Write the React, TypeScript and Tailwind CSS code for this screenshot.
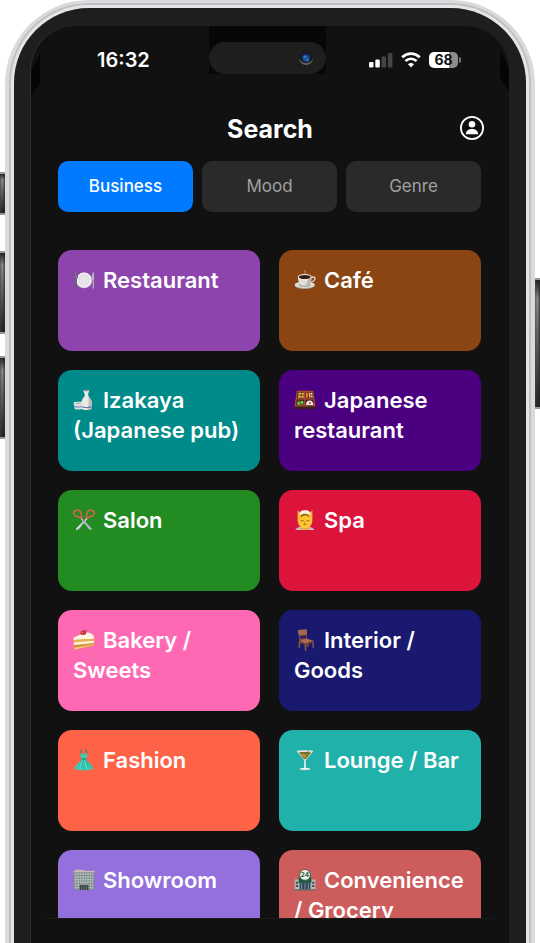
import { useState } from "react"
import type { ReactNode } from "react"

const TABS = ["Business", "Mood", "Genre"]

function Emoji({ children }: { children: ReactNode }) {
  return (
    <svg viewBox="0 0 24 24" aria-hidden="true" className="mr-2 -mt-1 inline-block size-[22px] align-middle">
      {children}
    </svg>
  )
}

const PlateIcon = () => (
  <Emoji>
    <ellipse cx="12" cy="12.5" rx="8.8" ry="8.6" fill="#c9c7d0" />
    <ellipse cx="12" cy="12" rx="8.4" ry="8.2" fill="#efedf2" />
    <circle cx="12" cy="12" r="5.8" fill="#d3d1da" />
    <circle cx="12" cy="12.3" r="5.2" fill="#e8e6ec" />
    <path d="M.8 3.5v5q0 2 1.6 2v10.4q.7 1 1.3 0V10.5q1.400-.3 1.300-2v-5" fill="none" stroke="#665d72" strokeWidth="1.1" />
    <path d="M2.8 3.5v6" stroke="#8e8799" strokeWidth=".8" />
    <path d="M22.9 2.5q-3 3-2.600 9l1.200.5v9.500h1.400z" fill="#c8c5d0" stroke="#716781" strokeWidth=".4" />
  </Emoji>
)

const CoffeeIcon = () => (
  <Emoji>
    <path d="M12.500 5q-2-1.500 0-3.800" fill="none" stroke="#d7a37b" strokeWidth=".9" />
    <ellipse cx="11.7" cy="18" rx="11" ry="3.9" fill="#a9a39e" />
    <ellipse cx="11.7" cy="17.2" rx="11" ry="3.6" fill="#e2deda" />
    <ellipse cx="11.7" cy="17.3" rx="6.8" ry="2.2" fill="#aaa49e" />
    <path d="M18.500 9.500c4-2 5.500.5 3.500 3-1.100 1.400-3 2-4.800 2" fill="none" stroke="#ddd6d0" strokeWidth="1.4" />
    <path d="M4.300 8.600c.2 6.500 2.800 9.700 7.400 9.700s7.300-3.200 7.500-9.700z" fill="#e4dfdb" />
    <path d="M15.500 11.500q-.5 4-3.500 6c5-.2 7-3.200 7.200-8.900z" fill="#b7afa9" />
    <ellipse cx="11.7" cy="8.5" rx="7.5" ry="3" fill="#f5f1ee" />
    <ellipse cx="11.7" cy="8.7" rx="6.5" ry="2.2" fill="#371b17" />
  </Emoji>
)

const SakeIcon = () => (
  <Emoji>
    <path d="M11 1.400q3.500-1.200 7 0l-1.600 4.200q.3 2.700 2 4.400c2.400 2 2.700 6 1.800 11.500-1.600 1.900-9.500 1.900-11 0-.8-5.700-.2-9.300 1.900-11.600 1.300-1.400 1.800-2.500 1.700-4.300z" fill="#ebe9e6" />
    <path d="M16.300 5.800q.3 2.700 2 4.200c2.500 2 2.700 6 1.900 11.500q-2 1.400-4.500 1.300c2-6.500 1.800-11 .6-17z" fill="#b9bcbc" />
    <ellipse cx="14.5" cy="1.7" rx="3.3" ry=".7" fill="#7c898a" />
    <path d="M9.200 19.700q5.500 1.300 11.200 0" fill="none" stroke="#4262ad" strokeWidth="1" />
    <path d="M.7 15.200h10l-1 6.500q-4 1.500-7.800 0z" fill="#dedfdf" />
    <ellipse cx="5.7" cy="15.4" rx="5" ry="1.5" fill="#f8f8f6" />
    <ellipse cx="5.7" cy="15.6" rx="3.8" ry=".9" fill="#a8b3b5" />
    <path d="M1.500 19.200q4 1.200 8.500 0" fill="none" stroke="#4262ad" strokeWidth=".8" />
  </Emoji>
)

const BentoIcon = () => (
  <Emoji>
    <path d="M3 2h18l2.500 17v2.800H.5V19z" fill="#362017" />
    <path d="M3 2h18l2.500 17H.5z" fill="#a84c38" />
    <path d="M4.100 3.500H11l-.3 6.500H3.200zM12.400 3.500h7.500l.9 6.500h-8.200zM3 11.500h8v6.200H2.200zM12.500 11.500H21l.9 6.200h-9.600z" fill="#482214" />
    <path d="M5 4.200h2.500v2.200H4.700zM8.300 4.200h2.400v2.200H8.200zM4.600 7.200h2.700v2.300H4.300zM8.100 7.200h2.500v2.300H8z" fill="#f2bd45" />
    <path d="M13.100 4.200h2l.2 5.200h-2.200z" fill="#ed8135" />
    <path d="M16 4.200h1.700l.3 5h-1.700z" fill="#ffb861" />
    <circle cx="19" cy="5.200" r="1" fill="#f1ede4" />
    <circle cx="19.400" cy="8.300" r="1.100" fill="#e6d9c0" />
    <path d="M3.100 17q.5-4.500 2.500-4.500l1 1.500 1.700-1.700 1.900 1.500.5 3.500z" fill="#51933c" />
    <circle cx="5" cy="16" r="1.200" fill="#96ca5c" />
    <circle cx="9" cy="14.500" r="1.100" fill="#a4d66b" />
    <path d="M13 17.500q.3-5 4.300-4.900 3.400.1 4 4.900z" fill="#f3e8e3" />
    <circle cx="17.300" cy="15.300" r="1.200" fill="#d04f54" />
  </Emoji>
)

const ScissorsIcon = () => (
  <Emoji>
    <path d="m9 9.300 11.500 12.200-.2 1.700q-3.700-1-5.800-5L8 10.500z" fill="#b5bfca" />
    <path d="M15 9.300 3.200 21.500l.3 1.700q3.700-1 5.800-5L16 10.500z" fill="#dce3e8" />
    <path d="m12 12.500-3 6q-2 3.700-5.500 4.700" fill="none" stroke="#8b9fae" strokeWidth=".7" />
    <path d="M9.700 9.800C8.500 9 3.200 9.200 1.500 6.500.2 4.500 1 1.500 4.300 1.200 8.800.8 9 5 9.700 9.800z" fill="none" stroke="#df604c" strokeWidth="1.700" />
    <path d="M14.300 9.800c1.200-.8 6.500-.6 8.200-3.300 1.300-2 .5-5-2.800-5.300-4.500-.4-4.700 3.800-5.400 8.600z" fill="none" stroke="#df604c" strokeWidth="1.700" />
    <circle cx="12" cy="12.800" r=".9" fill="#65707c" />
  </Emoji>
)

const MassageIcon = () => (
  <Emoji>
    <path d="M1.500 23q1-3.500 7-4h6.300q6.200.5 7.400 4z" fill="#c8b9c3" />
    <path d="M8.500 17h7l1.200 4.500q-4.500 2-9.300 0z" fill="#e5a51e" />
    <path d="M4 9q0-7 8-7.500 8 .5 8 7.500v4c-.6 5.300-3.800 8.200-8 8.200S4.700 18.200 4 13z" fill="#ffc532" />
    <path d="M5 7.500Q5.500 1 12 1.300 18.500 1 19 7.500q-3.500-3-7-3t-7 3z" fill="#f2eeeb" />
    <path d="M4 .5q2.500 3 2.200 7.300l2.500 1.700-1.500 1.500L4 8.500zM20 .5q-2.500 3-2.200 7.300l-2.500 1.700 1.500 1.500L20 8.500z" fill="#ffb82d" />
    <path d="M7.500 8.200q4-4 8.800-.4" fill="none" stroke="#704721" strokeWidth="1.300" />
    <path d="M7.200 12.600q1.500 1.200 3.200 0m3.200 0q1.700 1.200 3.200 0M10.500 17q1.500-1 3 0" fill="none" stroke="#854b18" strokeWidth=".9" />
    <path d="m12 13-.7 2.200h1.300" fill="none" stroke="#d38a14" strokeWidth=".7" />
  </Emoji>
)

const CakeIcon = () => (
  <Emoji>
    <path d="M.5 9.500 13.500 4q7.500.3 9.500 5v9.300L1.500 22.500z" fill="#e8ac4f" />
    <path d="M.5 9.500 13.500 3.500q8 .3 9.500 5.300v1.700L.7 12z" fill="#fff5e3" />
    <path d="m.7 12 22.300-1.500v2L.7 14z" fill="#e9ae4d" />
    <path d="M.8 14.500 23 12.700v2.500L1 17.500z" fill="#fff0d7" />
    <path d="m1 18 22-2.500v2.800L1.500 22.500z" fill="#d38b34" />
    <path d="m1.300 20.500 21.700-4v1L1.500 22.500z" fill="#f2cc80" />
    <path d="M8 5.700q-.4-4 3.500-4 4 .5 2.700 3.800Q11.500 7.500 8 5.700z" fill="#c93438" />
    <path d="M11.500 1.600q2-1.500 4 .5-1.700 1-4-.5z" fill="#47792e" />
    <circle cx="10.300" cy="3.700" r=".6" fill="#f28d75" />
  </Emoji>
)

const ChairIcon = () => (
  <Emoji>
    <path d="M4.500 1.200 13.800.5l.7 11-8.500 1.200z" fill="#88513d" />
    <path d="m6.500 7.800 6.700-.6.2 2.500-6.500.8z" fill="#1a1b70" />
    <path d="m4.500 1.200 9.300-.7.3 5.200-9.200.7z" fill="#a9694e" />
    <path d="m5 13 9-2.500 7.500 2.300-8.800 3.400z" fill="#ac6d4f" />
    <path d="m5 13 7.700 3.200v1.500L5 14.500zM12.700 16.200l8.800-3.400v1.600l-8.800 3.300z" fill="#71422f" />
    <path d="M5 14v6.500h1.700v-6zM11.500 16.500l.3 7.200h1.600l.2-7zM20 14l.2 7h1.500l-.2-7.500zM14.500 16v3.500h1.300v-4z" fill="#925941" />
  </Emoji>
)

const DressIcon = () => (
  <Emoji>
    <path d="m9.200.500-.7 5m5.700-5 1 5" stroke="#1a8a82" strokeWidth="1.200" />
    <path d="M8.500 4q2 1.500 3.300 1.700Q13.500 5.500 15.300 4l.3 4-1.300 3.300c1.500 3 6.200 5.300 8 10q-2.500 1.500-5 1.300-2.400 1-5.200.7-3.200.3-5.600-.6Q3.300 23 1.500 21c1.800-4.500 6.500-6.500 8-9.700L8 8z" fill="#3bcdb5" />
    <path d="m10 12-5 9.500m4-1 2-8.500m1 1v9m2-9.500 3 9M14 12l6 8.500" stroke="#1da596" strokeWidth=".7" />
    <path d="M10 13 7 21m6-8 2 8.500" stroke="#8be3d3" strokeWidth=".7" />
    <path d="M9.200 10.200h5.400v1.300H9.200z" fill="#0b8a80" />
  </Emoji>
)

const CocktailIcon = () => (
  <Emoji>
    <path d="M3 2.500h18l-8 9.800h-2z" fill="#d9e2d8" />
    <path d="M5.500 4.200h13l-5.500 7h-2z" fill="#8c7127" />
    <path d="M7.500 5.500h8L12 10z" fill="#c29a3d" />
    <ellipse cx="12" cy="2.500" rx="9" ry="1.100" fill="#ece6d8" />
    <ellipse cx="12" cy="4" rx="6.500" ry=".8" fill="#6b682d" />
    <path d="m12 8 3.800-6" stroke="#784f2d" strokeWidth=".8" />
    <circle cx="13" cy="6.500" r="1.500" fill="#718c36" />
    <path d="M11.200 11.500h1.600L13 21h-2z" fill="#e7efec" />
    <ellipse cx="12" cy="21.800" rx="5.800" ry="1.300" fill="#cedbd8" />
    <ellipse cx="12" cy="21.400" rx="4.500" ry=".7" fill="#f6faf8" />
  </Emoji>
)

const BuildingIcon = () => (
  <Emoji>
    <path d="M2.500.8h9V3h-9z" fill="#c7b4a7" />
    <path d="M.8 2.500h22.400v20.300H.8z" fill="#858c8e" />
    <path d="M.5 2h23v1.700H.5z" fill="#cbbcb0" />
    <path d="M2 5.800h20M2 8.700h20M2 11.600h20M2 14.500h20M2 17.400h20M2 20.300h20" stroke="#bcd0d1" strokeWidth="1.700" strokeDasharray="1.700 1" />
    <path d="M7.300 16.700h9.600v6.200H7.300z" fill="#374247" />
    <path d="M9.500 18v4.900m2.600-4.900v4.900m2.500-4.900v4.900" stroke="#738b90" strokeWidth=".8" />
    <path d="M6.800 16h10.600v1.300H6.800z" fill="#b4a69b" />
  </Emoji>
)

const StoreIcon = () => (
  <Emoji>
    <path d="M.8 11.500h4v-1h14.500v1h4V23H.8z" fill="#b8bab5" />
    <path d="M5 9.500h14V15H5z" fill="#20583f" />
    <path d="M6 14.500h12V23H6z" fill="#314b5b" />
    <path d="M8.300 15.500v7m3.700-7v7m3.700-7v7" stroke="#7e9dad" strokeWidth="1" />
    <path d="M2 14h2.500v2H2zm0 3.500h2.500v2H2zM19.800 14h2.400v2h-2.400zm0 3.500h2.400v2h-2.400z" fill="#354f55" />
    <path d="M.5 22h23v1.500H.5z" fill="#696f6b" />
    <circle cx="12" cy="6.700" r="6.300" fill="#36734b" />
    <circle cx="12" cy="6.500" r="5.300" fill="#f0f3e9" />
    <text x="12" y="9" textAnchor="middle" fontSize="7" fontWeight="700" fill="#2b5842">
      24
    </text>
  </Emoji>
)

const CATEGORIES = [
  { name: "Restaurant", color: "bg-[#8e44ad]", Icon: PlateIcon },
  { name: "Café", color: "bg-[#8b4513]", Icon: CoffeeIcon },
  { name: "Izakaya (Japanese pub)", color: "bg-[#008b8b]", Icon: SakeIcon },
  { name: "Japanese restaurant", color: "bg-[#4b0082]", Icon: BentoIcon },
  { name: "Salon", color: "bg-[#228b22]", Icon: ScissorsIcon },
  { name: "Spa", color: "bg-[#dc143c]", Icon: MassageIcon },
  { name: "Bakery / Sweets", color: "bg-[#ff69b4]", Icon: CakeIcon },
  { name: "Interior / Goods", color: "bg-[#191970]", Icon: ChairIcon },
  { name: "Fashion", color: "bg-[#ff6347]", Icon: DressIcon },
  { name: "Lounge / Bar", color: "bg-[#20b2aa]", Icon: CocktailIcon },
  { name: "Showroom", color: "bg-[#9370db]", Icon: BuildingIcon },
  { name: "Convenience / Grocery", color: "bg-[#cd5c5c]", Icon: StoreIcon },
]

function SideKey({ size }: { size: string }) {
  return (
    <div
      className={`${size} w-full border-y-2 border-[#999] bg-linear-to-b from-[#222] via-[#8c8c8c] via-15% to-[#222]`}
    >
      <div className="h-full bg-linear-to-r from-[#444]/60 via-transparent to-[#222]/70" />
    </div>
  )
}

function StatusBar() {
  return (
    <div className="grid h-[67px] shrink-0 grid-cols-[1fr_117px_183px]">
      <div className="pt-5 pl-[66px] text-xl leading-7 font-semibold">16:32</div>

      {/* Dynamic island */}
      <div className="h-12 bg-[#070707] pt-4">
        <div className="flex h-8 items-center justify-end rounded-full bg-[#1e1e1c] pr-3">
          <svg viewBox="0 0 16 16" className="size-4" aria-hidden="true">
            <circle cx="8" cy="8" r="7.500" fill="#171b20" />
            <path d="M.8 8a7.200 7.200 0 0 0 14.400 0q-1.500 4.500-7.200 4.500T.8 8z" fill="#5c5c59" />
            <circle cx="8" cy="8" r="4.800" fill="#0b2145" />
            <circle cx="8" cy="8" r="3.600" fill="#164f8e" />
            <circle cx="7" cy="7" r="1.300" fill="#347dbe" />
            <circle cx="9.500" cy="10" r=".8" fill="#a1c9df" />
          </svg>
        </div>
      </div>

      <div className="mt-[26px] flex h-4 items-center justify-end gap-2 pr-12">
        <svg viewBox="0 0 24 16" className="h-4 w-6" aria-hidden="true">
          <rect x="0" y="10" width="4.500" height="5.500" rx="1.300" fill="#fff" />
          <rect x="6.300" y="7.500" width="4.500" height="8" rx="1.300" fill="#fff" />
          <rect x="12.600" y="4.500" width="4.500" height="11" rx="1.300" fill="#454545" />
          <rect x="18.900" y="1" width="4.500" height="14.500" rx="1.300" fill="#454545" />
        </svg>
        <svg viewBox="0 0 20 16" className="h-4 w-5" fill="none" stroke="#fff" aria-hidden="true">
          <path d="M1.200 5.300Q5.200 1.700 10 1.700t8.800 3.600" strokeWidth="2.700" />
          <path d="M4.400 9Q7 6.700 10 6.700T15.600 9" strokeWidth="2.600" />
          <path d="m10 15.500-3-3.300q3-2.400 6 0z" fill="#fff" stroke="none" />
        </svg>
        <div className="flex items-center gap-px">
          <div className="h-4 w-[29px] rounded-[5px] bg-linear-to-r from-white from-68% to-[#8d8d8d] to-68% text-center text-sm leading-4 font-bold text-[#111]">
            68
          </div>
          <div className="h-1.5 w-0.5 rounded-r-full bg-[#777]" />
        </div>
      </div>
    </div>
  )
}

export default function App() {
  const [activeTab, setActiveTab] = useState("Business")

  return (
    <div className="flex h-screen overflow-hidden bg-white font-['Inter',sans-serif] text-white">
      {/* Left side keys */}
      <div className="flex w-[5px] shrink-0 flex-col pt-[172px]">
        <SideKey size="h-[43px]" />
        <div className="h-9" />
        <SideKey size="h-[83px]" />
        <div className="h-[22px]" />
        <SideKey size="h-[83px]" />
      </div>

      {/* Phone body */}
      <div className="flex min-w-0 flex-1 rounded-t-[84px] border-x-4 border-t-[3px] border-[#dadadd] bg-[#dadadd]">
        <div className="flex min-w-0 flex-1 rounded-t-[80px] border-x-2 border-t-2 border-[#bfc0c5] bg-[#bfc0c5]">
          <div className="flex min-w-0 flex-1 rounded-t-[78px] border-x-3 border-t-3 border-[#e4e5e4] bg-[#1e1e1c] px-[17px] pt-[18px]">
            <div className="relative flex min-w-0 flex-1 flex-col overflow-hidden rounded-t-[44px] bg-[#111] shadow-[-1px_0_0_#303030]">
              <svg viewBox="0 0 9 42" className="absolute top-7 left-0 h-[42px] w-[9px]" aria-hidden="true">
                <path d="M9 0v29L0 41V18z" fill="#050505" />
              </svg>
              <svg viewBox="0 0 9 42" className="absolute top-6 right-0 h-[42px] w-[9px]" aria-hidden="true">
                <path d="M0 0v29l9 12V18z" fill="#050505" />
              </svg>

              <StatusBar />

              {/* Header */}
              <header className="grid h-[68px] shrink-0 grid-cols-[1fr_auto_1fr] items-start px-[25px]">
                <h1 className="col-start-2 text-[25px] leading-[72px] font-bold">Search</h1>
                <button type="button" aria-label="Profile" className="mt-[23px] justify-self-end">
                  <svg viewBox="0 0 24 24" className="size-6" aria-hidden="true">
                    <circle cx="12" cy="12" r="11.100" fill="none" stroke="#fff" strokeWidth="1.800" />
                    <circle cx="12" cy="8.200" r="3.300" fill="#fff" />
                    <path d="M5.800 18.200c.4-3.600 2.800-5.200 6.200-5.200s5.800 1.600 6.200 5.200z" fill="#fff" />
                  </svg>
                </button>
              </header>

              {/* Tabs */}
              <div className="grid shrink-0 grid-cols-3 gap-[9px] pr-7 pl-[27px]">
                {TABS.map((tab) => (
                  <button
                    key={tab}
                    type="button"
                    onClick={() => setActiveTab(tab)}
                    className={`h-[51px] rounded-[10px] text-[17px] ${
                      activeTab === tab ? "bg-[#007aff] font-medium text-white" : "bg-[#2a2a2a] text-[#a0a0a0]"
                    }`}
                  >
                    {tab}
                  </button>
                ))}
              </div>

              {/* Categories */}
              <div className="mt-[38px] min-h-0 flex-1 overflow-y-auto pr-7 pl-[27px] [scrollbar-width:none]">
                <div className="grid grid-cols-2 gap-[19px]">
                  {CATEGORIES.map(({ name, color, Icon }) => (
                    <button
                      key={name}
                      type="button"
                      className={`${color} flex h-[101px] items-start rounded-[14px] px-[15px] pt-[15px] text-left text-[22px] leading-[30px] font-semibold`}
                    >
                      <span>
                        <Icon />
                        {name}
                      </span>
                    </button>
                  ))}
                </div>
              </div>

              <div className="mx-4 h-[25px] shrink-0 border-t border-[#1b1b1b]" />
            </div>
          </div>
        </div>
      </div>

      {/* Right side key */}
      <div className="w-[5px] shrink-0 pt-[278px]">
        <SideKey size="h-[131px]" />
      </div>
    </div>
  )
}
